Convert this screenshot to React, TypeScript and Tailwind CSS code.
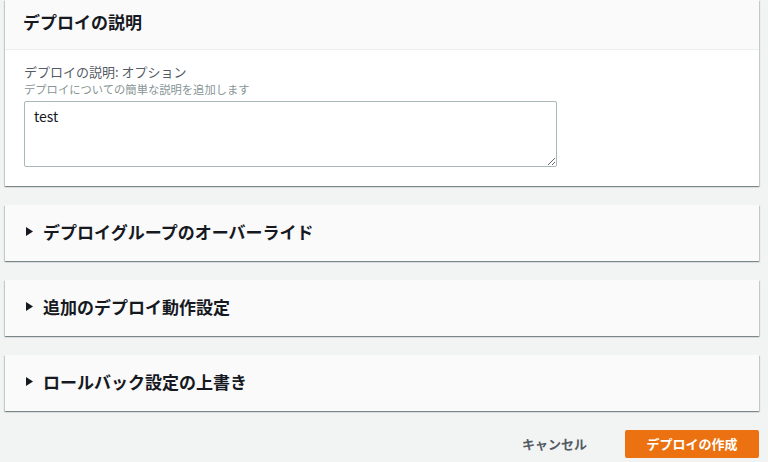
const FONT = '"Noto Sans CJK JP", "Noto Sans", sans-serif'

const CARD_SHADOW =
  'shadow-[0_1px_1px_0_rgba(0,28,36,0.3),1px_1px_1px_0_rgba(0,28,36,0.15),-1px_1px_1px_0_rgba(0,28,36,0.15)]'

function Triangle() {
  return (
    <svg width="7" height="9" viewBox="0 0 7 9" className="shrink-0">
      <path d="M0 0 L7 4.5 L0 9 Z" fill="#16191f" />
    </svg>
  )
}

function CollapsedSection({ title }: { title: string }) {
  return (
    <div className={`h-[56px] bg-[#fafafa] flex items-center pl-[21px] pb-[4px] gap-[10px] ${CARD_SHADOW}`}>
      <Triangle />
      <span className="text-[17px] font-bold text-[#16191f] leading-none">{title}</span>
    </div>
  )
}

export default function App() {
  const sections = ['デプロイグループのオーバーライド', '追加のデプロイ動作設定', 'ロールバック設定の上書き']

  return (
    <div className="w-[768px] h-[462px] bg-[#f2f3f3] overflow-hidden" style={{ fontFamily: FONT }}>
      <div className="px-[5px] pr-[9px] flex flex-col gap-[19px]">
        {/* Description card */}
        <div className={`bg-white ${CARD_SHADOW}`}>
          <div className="h-[50px] bg-[#fafafa] border-b border-[#eaeded] flex items-center px-[18px] pb-[6px]">
            <h2 className="text-[17px] font-bold text-[#16191f] leading-none">デプロイの説明</h2>
          </div>
          <div className="px-[19px] pt-[13px] pb-[19px]">
            <div className="text-[13px] leading-[18px] text-[#545b64]">デプロイの説明: オプション</div>
            <div className="text-[11.3px] leading-[16px] text-[#879596]">デプロイについての簡単な説明を追加します</div>
            <textarea
              defaultValue="test"
              className="mt-[4px] block w-[533px] h-[66px] border border-[#aab7b8] rounded-[2px] px-[9px] py-[4px] text-[14px] leading-[20px] text-[#16191f] outline-none"
              style={{ fontFamily: FONT }}
            />
          </div>
        </div>

        {sections.map(title => (
          <CollapsedSection key={title} title={title} />
        ))}

        {/* Footer actions */}
        <div className="flex justify-end items-center gap-[20px]">
          <button className="h-[28px] px-[18px] text-[13px] font-bold text-[#545b64]">キャンセル</button>
          <button className="h-[28px] w-[134px] rounded-[2px] bg-[#ec7211] text-[13px] font-bold text-white">
            デプロイの作成
          </button>
        </div>
      </div>
    </div>
  )
}
